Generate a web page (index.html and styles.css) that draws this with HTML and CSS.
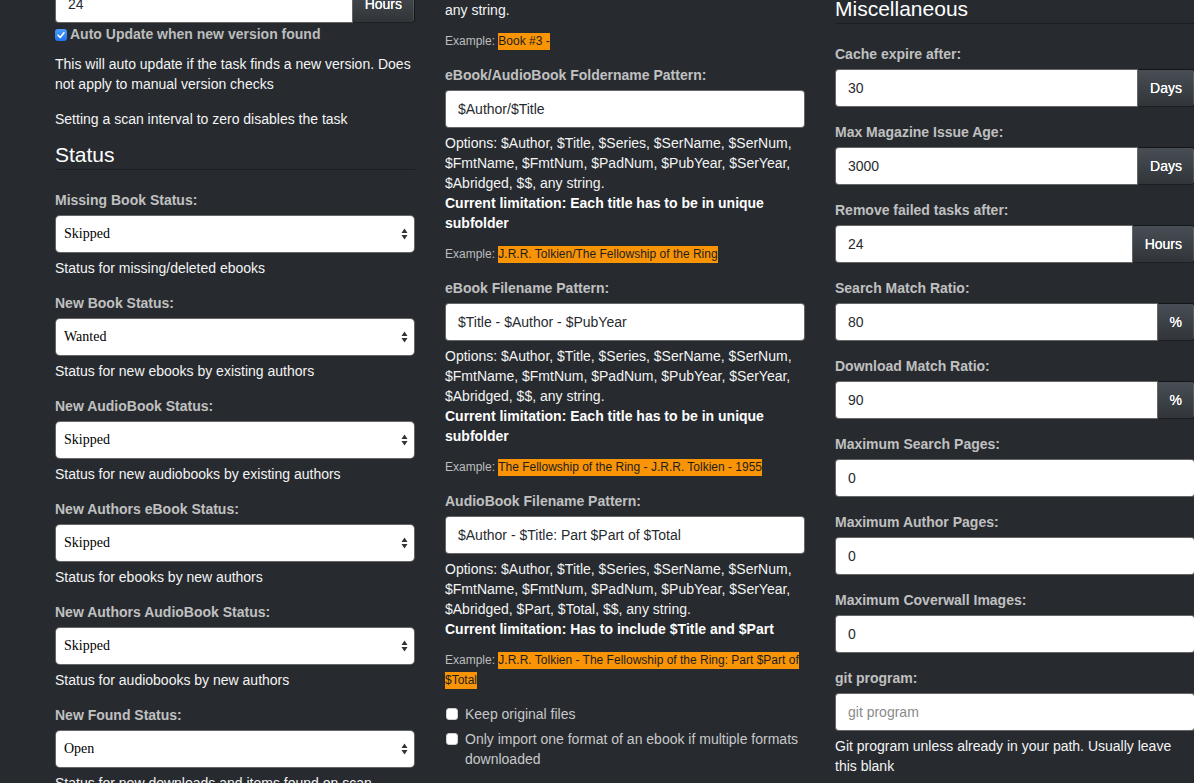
FILE: index.html
```html
<!DOCTYPE html>
<html lang="en">
<head>
<meta charset="utf-8">
<title>Config</title>
<link rel="stylesheet" href="styles.css">
</head>
<body>
<div class="page">
  <div class="col col-left">
    <div class="input-group">
      <input class="control" value="24">
      <span class="addon">Hours</span>
    </div>
    <label class="check-row strong">
      <span class="cb cb-on"><svg width="12" height="12" viewBox="0 0 12 12"><path d="M3 6.2 L5.2 8.4 L9 3.8" fill="none" stroke="#fff" stroke-width="1.6" stroke-linecap="round" stroke-linejoin="round"/></svg></span>
      Auto Update when new version found
    </label>
    <p class="help help-a">This will auto update if the task finds a new version. Does<br>not apply to manual version checks</p>
    <p class="help help-b">Setting a scan interval to zero disables the task</p>
    <h3 class="legend legend-status">Status</h3>

    <div class="group">
      <span class="label">Missing Book Status:</span>
      <div class="select"><span>Skipped</span><svg width="7" height="12" viewBox="0 0 7 12"><path d="M0.5 5 L3.5 0.5 L6.5 5 Z M0.5 7 L3.5 11.5 L6.5 7 Z" fill="#333"/></svg></div>
      <p class="help">Status for missing/deleted ebooks</p>
    </div>
    <div class="group">
      <span class="label">New Book Status:</span>
      <div class="select"><span>Wanted</span><svg width="7" height="12" viewBox="0 0 7 12"><path d="M0.5 5 L3.5 0.5 L6.5 5 Z M0.5 7 L3.5 11.5 L6.5 7 Z" fill="#333"/></svg></div>
      <p class="help">Status for new ebooks by existing authors</p>
    </div>
    <div class="group">
      <span class="label">New AudioBook Status:</span>
      <div class="select"><span>Skipped</span><svg width="7" height="12" viewBox="0 0 7 12"><path d="M0.5 5 L3.5 0.5 L6.5 5 Z M0.5 7 L3.5 11.5 L6.5 7 Z" fill="#333"/></svg></div>
      <p class="help">Status for new audiobooks by existing authors</p>
    </div>
    <div class="group">
      <span class="label">New Authors eBook Status:</span>
      <div class="select"><span>Skipped</span><svg width="7" height="12" viewBox="0 0 7 12"><path d="M0.5 5 L3.5 0.5 L6.5 5 Z M0.5 7 L3.5 11.5 L6.5 7 Z" fill="#333"/></svg></div>
      <p class="help">Status for ebooks by new authors</p>
    </div>
    <div class="group">
      <span class="label">New Authors AudioBook Status:</span>
      <div class="select"><span>Skipped</span><svg width="7" height="12" viewBox="0 0 7 12"><path d="M0.5 5 L3.5 0.5 L6.5 5 Z M0.5 7 L3.5 11.5 L6.5 7 Z" fill="#333"/></svg></div>
      <p class="help">Status for audiobooks by new authors</p>
    </div>
    <div class="group">
      <span class="label">New Found Status:</span>
      <div class="select"><span>Open</span><svg width="7" height="12" viewBox="0 0 7 12"><path d="M0.5 5 L3.5 0.5 L6.5 5 Z M0.5 7 L3.5 11.5 L6.5 7 Z" fill="#333"/></svg></div>
      <p class="help">Status for new downloads and items found on scan</p>
    </div>
  </div>

  <div class="col col-mid">
    <p class="help help-top">any string.</p>
    <p class="example">Example: <span class="hl">Book #3 - </span></p>

    <div class="pgroup">
      <span class="label">eBook/AudioBook Foldername Pattern:</span>
      <input class="control" value="$Author/$Title">
      <p class="help help-opt">Options: $Author, $Title, $Series, $SerName, $SerNum,<br>$FmtName, $FmtNum, $PadNum, $PubYear, $SerYear,<br>$Abridged, $$, any string.<br><b>Current limitation: Each title has to be in unique<br>subfolder</b></p>
      <p class="example">Example: <span class="hl">J.R.R. Tolkien/The Fellowship of the Ring</span></p>
    </div>

    <div class="pgroup">
      <span class="label">eBook Filename Pattern:</span>
      <input class="control" value="$Title - $Author - $PubYear">
      <p class="help help-opt">Options: $Author, $Title, $Series, $SerName, $SerNum,<br>$FmtName, $FmtNum, $PadNum, $PubYear, $SerYear,<br>$Abridged, $$, any string.<br><b>Current limitation: Each title has to be in unique<br>subfolder</b></p>
      <p class="example">Example: <span class="hl">The Fellowship of the Ring - J.R.R. Tolkien - 1955</span></p>
    </div>

    <div class="pgroup">
      <span class="label">AudioBook Filename Pattern:</span>
      <input class="control" value="$Author - $Title: Part $Part of $Total">
      <p class="help help-opt">Options: $Author, $Title, $Series, $SerName, $SerNum,<br>$FmtName, $FmtNum, $PadNum, $PubYear, $SerYear,<br>$Abridged, $Part, $Total, $$, any string.<br><b>Current limitation: Has to include $Title and $Part</b></p>
      <p class="example">Example: <span class="hl">J.R.R. Tolkien - The Fellowship of the Ring: Part $Part of<br>$Total</span></p>
    </div>

    <label class="opt-row opt-first"><span class="cb cb-off"></span><span>Keep original files</span></label>
    <label class="opt-row"><span class="cb cb-off"></span><span>Only import one format of an ebook if multiple formats downloaded</span></label>
  </div>

  <div class="col col-right">
    <h3 class="legend legend-misc">Miscellaneous</h3>
    <div class="group">
      <span class="label">Cache expire after:</span>
      <div class="input-group"><input class="control" value="30"><span class="addon">Days</span></div>
    </div>
    <div class="group">
      <span class="label">Max Magazine Issue Age:</span>
      <div class="input-group"><input class="control" value="3000"><span class="addon">Days</span></div>
    </div>
    <div class="group">
      <span class="label">Remove failed tasks after:</span>
      <div class="input-group"><input class="control" value="24"><span class="addon">Hours</span></div>
    </div>
    <div class="group">
      <span class="label">Search Match Ratio:</span>
      <div class="input-group"><input class="control" value="80"><span class="addon">%</span></div>
    </div>
    <div class="group">
      <span class="label">Download Match Ratio:</span>
      <div class="input-group"><input class="control" value="90"><span class="addon">%</span></div>
    </div>
    <div class="group">
      <span class="label">Maximum Search Pages:</span>
      <input class="control" value="0">
    </div>
    <div class="group">
      <span class="label">Maximum Author Pages:</span>
      <input class="control" value="0">
    </div>
    <div class="group">
      <span class="label">Maximum Coverwall Images:</span>
      <input class="control" value="0">
    </div>
    <div class="group">
      <span class="label">git program:</span>
      <input class="control" placeholder="git program">
      <p class="help">Git program unless already in your path. Usually leave<br>this blank</p>
    </div>
  </div>
</div>
</body>
</html>
```

FILE: styles.css
```css
* { box-sizing: border-box; }
html, body { margin: 0; padding: 0; height: 100%; }
body {
  background: #272b30;
  color: #c8c8c8;
  font-family: "Liberation Sans", Arial, sans-serif;
  font-size: 14px;
  line-height: 20px;
  overflow: hidden;
}
.page {
  display: grid;
  grid-template-columns: 360px 360px 360px;
  column-gap: 30px;
  padding-left: 55px;
  width: 1195px;
}
.col { min-width: 0; }
.col-left { margin-top: -15px; }

p { margin: 0; }

.legend {
  font-size: 21px;
  line-height: 29px;
  font-weight: normal;
  color: #fff;
  border-bottom: 1px solid #1c1e22;
  margin: 0 0 20px;
}
.legend-status { margin-top: 11px; }
.legend-misc { margin-top: -6px; }

.label {
  display: block;
  font-weight: bold;
  color: #c0c0c0;
  margin-bottom: 5px;
}
.group { margin-bottom: 15px; }

.control {
  display: block;
  width: 100%;
  height: 38px;
  margin: 0;
  padding: 8px 12px;
  background: #fff;
  border: 1px solid rgba(0, 0, 0, 0.6);
  border-radius: 4px;
  color: #272b30;
  font-family: "Liberation Sans", Arial, sans-serif;
  font-size: 14px;
  line-height: 20px;
  outline: none;
}
.control::placeholder { color: #8a8a8a; }

.input-group { display: flex; }
.input-group .control {
  flex: 1;
  min-width: 0;
  border-top-right-radius: 0;
  border-bottom-right-radius: 0;
}
.addon {
  flex: none;
  height: 38px;
  padding: 8px 12px;
  color: #fff;
  background: linear-gradient(#484e55, #3a3f44 60%, #313539);
  border: 1px solid rgba(0, 0, 0, 0.6);
  border-left: 0;
  border-radius: 0 4px 4px 0;
  box-shadow: inset -1px 0 0 rgba(255, 255, 255, 0.12);
  text-shadow: 0 0 0.4px #fff;
}

.select {
  display: flex;
  align-items: center;
  justify-content: space-between;
  height: 38px;
  padding: 0 6px 0 8px;
  background: #fff;
  border: 1px solid rgba(0, 0, 0, 0.6);
  border-radius: 5px;
  color: #000;
  font-family: "Liberation Serif", "Times New Roman", serif;
  font-size: 14px;
}
.select svg { display: block; }

.help {
  color: #f4f4f4;
  margin: 5px 0 0;
}
.help b { font-weight: bold; color: #fff; }
.help-a { margin-top: 10px; }
.help-b { margin-top: 15px; }
.help-top { margin-top: 0; }

.check-row {
  display: flex;
  align-items: center;
  gap: 3px;
  margin-top: 1px;
  height: 20px;
}
.strong { font-weight: bold; color: #bdbdbd; }

.cb {
  display: inline-block;
  flex: none;
  width: 12px;
  height: 12px;
  border-radius: 3px;
}
.cb-on {
  background: linear-gradient(#4d9bff, #1f74f0);
  margin-top: 2px;
}
.cb-on svg { display: block; }
.cb-off {
  background: #fff;
  border: 1px solid #d0d0d0;
  margin-top: 4px;
}

.example {
  font-size: 12px;
  line-height: 20px;
  color: #bdbdbd;
  margin-top: 11px;
  margin-bottom: 14px;
}
.hl {
  background: #f89406;
  color: #1e1e1e;
  padding: 1px 0 2px;
}

.pgroup { margin: 0; }

.opt-row {
  display: flex;
  align-items: flex-start;
  gap: 7px;
  color: #c8c8c8;
  margin-top: 5px;
  padding-left: 1px;
}
.opt-first { margin-top: 0; }
```
